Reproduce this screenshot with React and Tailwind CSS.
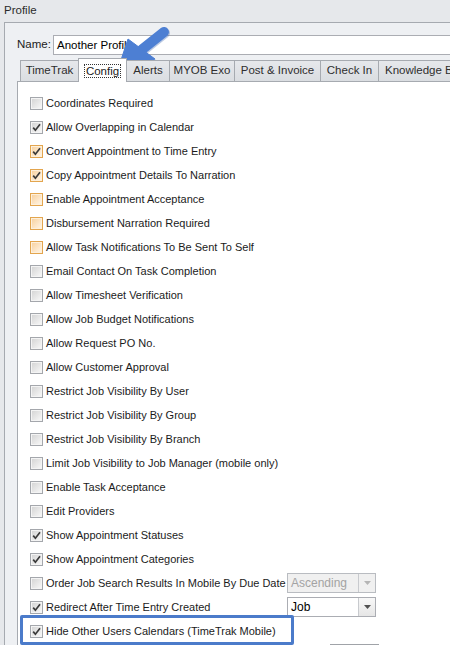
import React from "react";

const rows = [
  { label: "Coordinates Required" },
  { label: "Allow Overlapping in Calendar", checked: true },
  { label: "Convert Appointment to Time Entry", checked: true, orange: true },
  { label: "Copy Appointment Details To Narration", checked: true, orange: true },
  { label: "Enable Appointment Acceptance", orange: true },
  { label: "Disbursement Narration Required", orange: true },
  { label: "Allow Task Notifications To Be Sent To Self", orange: true },
  { label: "Email Contact On Task Completion" },
  { label: "Allow Timesheet Verification" },
  { label: "Allow Job Budget Notifications" },
  { label: "Allow Request PO No." },
  { label: "Allow Customer Approval" },
  { label: "Restrict Job Visibility By User" },
  { label: "Restrict Job Visibility By Group" },
  { label: "Restrict Job Visibility By Branch" },
  { label: "Limit Job Visibility to Job Manager (mobile only)" },
  { label: "Enable Task Acceptance" },
  { label: "Edit Providers" },
  { label: "Show Appointment Statuses", checked: true },
  { label: "Show Appointment Categories", checked: true },
  { label: "Order Job Search Results In Mobile By Due Date", combo: "Ascending", disabled: true },
  { label: "Redirect After Time Entry Created", checked: true, combo: "Job" },
  { label: "Hide Other Users Calendars (TimeTrak Mobile)", checked: true },
];

const tabs = [
  { name: "TimeTrak", w: "w-[59px]" },
  { name: "Config", w: "w-[49px]", active: true },
  { name: "Alerts", w: "w-[44px]" },
  { name: "MYOB Exo", w: "w-[66px]" },
  { name: "Post & Invoice", w: "w-[87px]" },
  { name: "Check In", w: "w-[59px]" },
  { name: "Knowledge Base", w: "w-[100px]" },
];

function Checkbox({ checked, orange }) {
  return (
    <span
      className={
        orange
          ? "flex h-[13px] w-[13px] shrink-0 items-center justify-center border border-[#e3a54e] bg-[#fdf0dc]"
          : "flex h-[13px] w-[13px] shrink-0 items-center justify-center border border-[#a4a7ac] bg-[#f4f4f4]"
      }
    >
      <span
        className={
          orange
            ? "flex h-[9px] w-[9px] items-center justify-center bg-gradient-to-br from-[#f8d3a2] to-[#fff3e2]"
            : "flex h-[9px] w-[9px] items-center justify-center bg-gradient-to-br from-[#d6d6d6] to-[#f6f6f6]"
        }
      >
        {checked && (
          <svg width="9" height="9" viewBox="0 0 9 9">
            <path d="M1.2 4.6 L3.4 7.2 L8 1.2" fill="none" stroke="#3a3a3a" strokeWidth="1.7" />
          </svg>
        )}
      </span>
    </span>
  );
}

function Combo({ value, disabled }) {
  return (
    <div
      className={
        disabled
          ? "flex h-[20px] w-[89px] border border-[#b9bcc1] bg-[#f0f0f0] text-[#a3a3a3]"
          : "flex h-[20px] w-[89px] border border-[#abadb3] bg-white text-black"
      }
    >
      <span className="flex-1 pl-[3px] text-[12px] leading-[18px]">{value}</span>
      <span
        className={
          disabled
            ? "flex w-[17px] items-center justify-center border-l border-[#c8cace] bg-[#f0f0f0]"
            : "flex w-[17px] items-center justify-center border-l border-[#c8cace] bg-gradient-to-b from-[#f8f8f8] to-[#e6e6e6]"
        }
      >
        <svg width="7" height="4" viewBox="0 0 7 4">
          <path d="M0 0 L7 0 L3.5 4 Z" fill={disabled ? "#b5b5b5" : "#505050"} />
        </svg>
      </span>
    </div>
  );
}

export default function App() {
  return (
    <div className="relative h-[645px] w-[450px] overflow-hidden bg-[#e6e8eb] font-['Liberation_Sans',Arial,sans-serif] text-[11px] text-[#1b1b1b]">
      <div className="h-[22px] pl-[4px] pt-[3px] text-[11.5px] leading-[14px] text-[#2b2b2b]">Profile</div>

      <div className="ml-[4px] h-full border-l border-t border-[#a6aab0] bg-[#eef0f3] pl-[12px] pt-[12px]">
        <div className="flex h-[20px] items-center">
          <span className="w-[36px] text-[11.5px]">Name:</span>
          <div className="h-[20px] flex-1 border border-r-0 border-[#abadb3] bg-white pl-[3px] text-[11.5px] leading-[18px] text-black">
            Another Profile
          </div>
        </div>

        <div className="relative z-10 mt-[4px] flex h-[22px] items-end pl-[4px]">
          {tabs.map((t) =>
            t.active ? (
              <div
                key={t.name}
                className={`${t.w} -mb-px -ml-px flex h-[24px] shrink-0 items-center justify-center border border-b-0 border-[#a6aab0] bg-white`}
              >
                <span className="border border-dotted border-[#333] px-[1px] text-[11.5px] leading-[12px]">{t.name}</span>
              </div>
            ) : (
              <div
                key={t.name}
                className={`${t.w} -ml-px flex h-[21px] shrink-0 items-center whitespace-nowrap border border-b-0 border-[#a6aab0] bg-gradient-to-b from-[#e6e8eb] to-[#dadde1] text-[11.5px] text-[#2e2e2e] ${t.name === "Knowledge Base" ? "justify-start pl-[6px]" : "justify-center"}`}
              >
                {t.name}
              </div>
            )
          )}
        </div>

        <div className="h-full border-l border-t border-[#a6aab0] bg-white pt-[9px]">
          {rows.map((r) => (
            <div key={r.label} className="flex h-[24px] items-center pl-[12px]">
              <Checkbox checked={r.checked} orange={r.orange} />
              {r.combo ? (
                <>
                  <span className="w-[244px] whitespace-nowrap pl-[3px]">{r.label}</span>
                  <Combo value={r.combo} disabled={r.disabled} />
                </>
              ) : (
                <span className="whitespace-nowrap pl-[3px]">{r.label}</span>
              )}
            </div>
          ))}
          <div className="ml-[312px] mt-px h-[10px] w-[49px] border-t border-[#a0a3a8]" />
        </div>
      </div>

      <div className="absolute left-[20px] top-[615px] h-[30px] w-[274px] rounded-[2px] border-[3px] border-[#4b7bca]" />

      <svg className="absolute left-0 top-0" width="450" height="100" viewBox="0 0 450 100">
        <line x1="142" y1="49.5" x2="164" y2="32" stroke="#3f68b0" strokeWidth="10" strokeLinecap="round" opacity="0.35" transform="translate(1 1)" />
        <polygon points="118,69 128,39 155,59" fill="#3f68b0" opacity="0.35" transform="translate(1 1)" />
        <line x1="142" y1="49.5" x2="164" y2="32" stroke="#4d7fd3" strokeWidth="10" strokeLinecap="round" />
        <polygon points="118,69 128,39 155,59" fill="#4d7fd3" strokeLinejoin="round" stroke="#4d7fd3" strokeWidth="1" />
      </svg>
    </div>
  );
}
